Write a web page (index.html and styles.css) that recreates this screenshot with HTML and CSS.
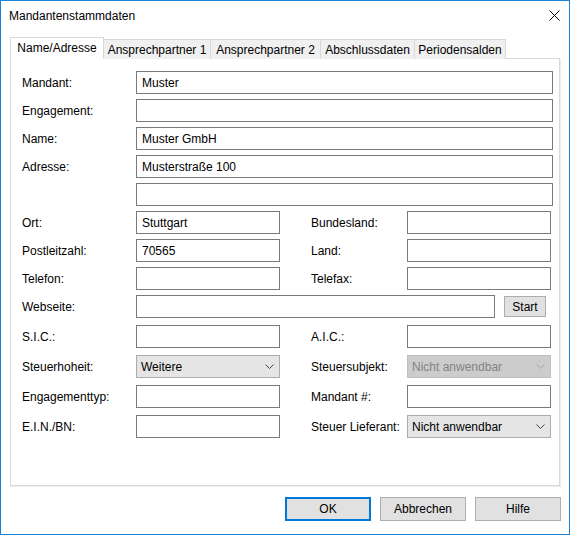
FILE: index.html
```html
<!DOCTYPE html>
<html lang="de">
<head>
    <meta charset="UTF-8">
    <title>Mandantenstammdaten</title>
    <link rel="stylesheet" href="styles.css">
</head>
<body>
    <div class="window">
        <div class="titlebar">
            <span class="title">Mandantenstammdaten</span>
            <svg class="close" width="11" height="11" viewBox="0 0 11 11">
                <path d="M0.5 0.5 L10.5 10.5 M10.5 0.5 L0.5 10.5" stroke="#000" stroke-width="1" fill="none"/>
            </svg>
        </div>

        <div class="tabs">
            <div class="tab active">Name/Adresse</div>
            <div class="tab t1">Ansprechpartner 1</div>
            <div class="tab t2">Ansprechpartner 2</div>
            <div class="tab t3">Abschlussdaten</div>
            <div class="tab t4">Periodensalden</div>
        </div>

        <div class="panel">
            <div class="row">
                <label class="label">Mandant:</label>
                <input class="field full" type="text" value="Muster">
            </div>
            <div class="row">
                <label class="label">Engagement:</label>
                <input class="field full" type="text">
            </div>
            <div class="row">
                <label class="label">Name:</label>
                <input class="field full" type="text" value="Muster GmbH">
            </div>
            <div class="row">
                <label class="label">Adresse:</label>
                <input class="field full" type="text" value="Musterstraße 100">
            </div>
            <div class="row">
                <span class="label"></span>
                <input class="field full" type="text">
            </div>
            <div class="row">
                <label class="label">Ort:</label>
                <input class="field half" type="text" value="Stuttgart">
                <label class="label right">Bundesland:</label>
                <input class="field half" type="text">
            </div>
            <div class="row">
                <label class="label">Postleitzahl:</label>
                <input class="field half" type="text" value="70565">
                <label class="label right">Land:</label>
                <input class="field half" type="text">
            </div>
            <div class="row">
                <label class="label">Telefon:</label>
                <input class="field half" type="text">
                <label class="label right">Telefax:</label>
                <input class="field half" type="text">
            </div>
            <div class="row wide">
                <label class="label">Webseite:</label>
                <input class="field web" type="text">
                <button class="btn start">Start</button>
            </div>
            <div class="row wide">
                <label class="label">S.I.C.:</label>
                <input class="field half" type="text">
                <label class="label right">A.I.C.:</label>
                <input class="field half" type="text">
            </div>
            <div class="row wide">
                <label class="label">Steuerhoheit:</label>
                <div class="combo half">
                    <span>Weitere</span>
                    <svg width="9" height="5" viewBox="0 0 9 5"><path d="M0.5 0.5 L4.5 4.5 L8.5 0.5" stroke="#444" fill="none"/></svg>
                </div>
                <label class="label right">Steuersubjekt:</label>
                <div class="combo half disabled">
                    <span>Nicht anwendbar</span>
                    <svg width="9" height="5" viewBox="0 0 9 5"><path d="M0.5 0.5 L4.5 4.5 L8.5 0.5" stroke="#a6a6a6" fill="none"/></svg>
                </div>
            </div>
            <div class="row wide">
                <label class="label">Engagementtyp:</label>
                <input class="field half" type="text">
                <label class="label right">Mandant #:</label>
                <input class="field half" type="text">
            </div>
            <div class="row wide">
                <label class="label">E.I.N./BN:</label>
                <input class="field half" type="text">
                <label class="label right">Steuer Lieferant:</label>
                <div class="combo half">
                    <span>Nicht anwendbar</span>
                    <svg width="9" height="5" viewBox="0 0 9 5"><path d="M0.5 0.5 L4.5 4.5 L8.5 0.5" stroke="#444" fill="none"/></svg>
                </div>
            </div>
        </div>

        <div class="footer">
            <button class="btn dialog default">OK</button>
            <button class="btn dialog">Abbrechen</button>
            <button class="btn dialog">Hilfe</button>
        </div>
    </div>
</body>
</html>
```

FILE: styles.css
```css
body {
    margin: 0;
    padding: 0;
    background-color: #ffffff;
    font-family: "Liberation Sans", Arial, sans-serif;
    font-size: 12px;
    color: #000;
}
.window {
    width: 570px;
    height: 535px;
    box-sizing: border-box;
    border: 1px solid #1883d7;
    background-color: #fff;
    display: flex;
    flex-direction: column;
}
.titlebar {
    height: 36px;
    display: flex;
    justify-content: space-between;
    align-items: flex-start;
    padding: 0 9px 0 8px;
}
.title {
    line-height: 30px;
}
.close {
    margin-top: 9px;
}
.tabs {
    display: flex;
    align-items: flex-end;
    margin-left: 9px;
    margin-bottom: -1px;
    position: relative;
    z-index: 1;
}
.tab {
    box-sizing: border-box;
    height: 20px;
    line-height: 20px;
    text-align: center;
    background-color: #f0f0f0;
    border: 1px solid #d9d9d9;
    border-left: none;
    border-bottom: none;
    white-space: nowrap;
}
.tab.active {
    width: 94px;
    height: 22px;
    line-height: 20px;
    background-color: #fff;
    border-left: 1px solid #d9d9d9;
}
.t1 { width: 107px; }
.t2 { width: 110px; }
.t3 { width: 94px; }
.t4 { width: 91px; }
.panel {
    box-sizing: border-box;
    width: 550px;
    height: 428px;
    margin-left: 9px;
    border: 1px solid #d9d9d9;
    box-shadow: 1px 1px 0 #ececec;
    padding: 12px 0 0 11px;
}
.row {
    display: flex;
    align-items: center;
    height: 23px;
    margin-bottom: 5px;
}
.row.wide {
    margin-bottom: 7px;
}
.label {
    width: 114px;
    flex-shrink: 0;
}
.label.right {
    width: 96px;
    margin-left: 31px;
}
.field {
    box-sizing: border-box;
    height: 23px;
    border: 1px solid #7a7a7a;
    padding: 0 5px;
    font-family: inherit;
    font-size: 12px;
    color: #000;
    background-color: #fff;
    outline: none;
    margin: 0;
}
.full { width: 417px; }
.half { width: 144px; }
.web { width: 359px; }
.combo {
    box-sizing: border-box;
    height: 23px;
    display: flex;
    justify-content: space-between;
    align-items: center;
    padding: 0 5px 0 4px;
    background-color: #e5e5e5;
    border: 1px solid #acacac;
}
.combo.disabled {
    background-color: #cccccc;
    border-color: #bfbfbf;
    color: #838383;
}
.btn {
    box-sizing: border-box;
    font-family: inherit;
    font-size: 12px;
    color: #000;
    background-color: #e1e1e1;
    border: 1px solid #adadad;
    padding: 0;
    margin: 0;
}
.start {
    width: 42px;
    height: 21px;
    margin-left: 9px;
}
.footer {
    display: flex;
    justify-content: flex-end;
    gap: 9px;
    padding-right: 8px;
    margin-top: 11px;
}
.dialog {
    width: 86px;
    height: 24px;
}
.dialog.default {
    border: 2px solid #0078d7;
}
```
